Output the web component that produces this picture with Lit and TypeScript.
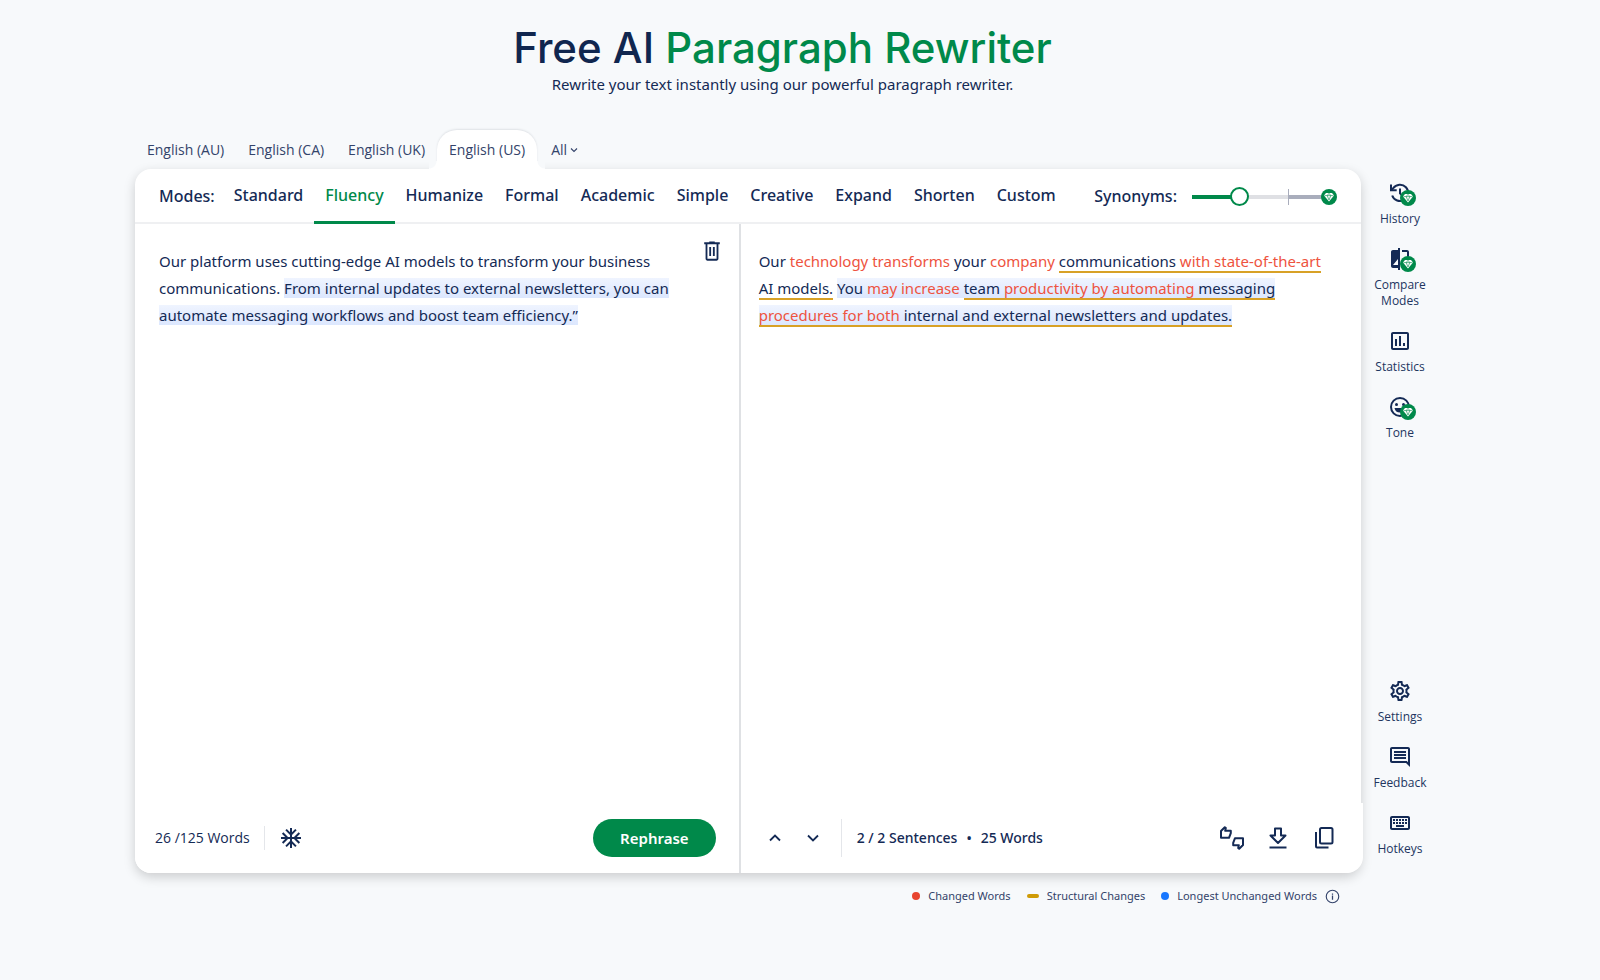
import { LitElement, html, css, svg } from "lit";
import { customElement, property, state } from "lit/decorators.js";
import { classMap } from "lit/directives/class-map.js";

const icons: Record<string, unknown> = {
  history: svg`<g fill="none" stroke="currentColor" stroke-width="2"><path d="M4.200 14.500A8.200 8.200 0 1 0 5.200 7.200L3.500 9"/><path d="M3 3.500v5.700h5.700"/><path d="M12 7.500V12.400l3.200 3.200"/></g>`,
  compare: svg`<path d="M10 3H5c-1.100 0-2 .9-2 2v14c0 1.100.9 2 2 2h5v2h2V1h-2v2zm0 15H5l5-6v6zm9-15h-5v2h5v13l-5-6v9h5c1.100 0 2-.9 2-2V5c0-1.100-.9-2-2-2z"/>`,
  stats: svg`<path d="M19 3H5c-1.100 0-2 .9-2 2v14c0 1.100.9 2 2 2h14c1.100 0 2-.9 2-2V5c0-1.100-.9-2-2-2zm0 16H5V5h14v14zM7 10h2v7H7zm4-3h2v10h-2zm4 7h2v3h-2z"/>`,
  tone: svg`<path d="M12 2a10 10 0 1 0 0 20 10 10 0 0 0 0-20zm0 18a8 8 0 1 1 0-16 8 8 0 0 1 0 16z"/><circle cx="8.500" cy="9.500" r="1.500"/><circle cx="15.500" cy="9.500" r="1.500"/><path d="M6.500 13h11a5.600 5.600 0 0 1-11 0z"/>`,
  settings: svg`<path d="M19.430 12.980c.04-.32.07-.64.07-.98 0-.34-.03-.66-.07-.98l2.110-1.650c.19-.15.24-.42.12-.64l-2-3.460c-.09-.16-.26-.25-.44-.25-.06 0-.12.010-.17.030l-2.490 1c-.52-.4-1.080-.73-1.690-.98l-.38-2.650C14.460 2.180 14.250 2 14 2h-4c-.25 0-.46.180-.49.420l-.38 2.650c-.61.250-1.170.590-1.690.980l-2.490-1c-.06-.02-.12-.03-.18-.03-.17 0-.34.090-.43.250l-2 3.460c-.13.220-.07.490.12.640l2.110 1.650c-.04.320-.07.650-.07.980 0 .33.030.66.070.98l-2.110 1.650c-.19.150-.24.420-.12.640l2 3.460c.09.160.26.250.44.250.06 0 .12-.01.17-.03l2.490-1c.52.400 1.080.730 1.690.980l.38 2.650c.03.240.24.420.49.420h4c.25 0 .46-.18.49-.42l.38-2.650c.61-.25 1.170-.59 1.690-.98l2.490 1c.06.020.12.030.18.030.17 0 .34-.09.43-.25l2-3.460c.12-.22.07-.49-.12-.64l-2.110-1.650zm-1.980-1.710c.04.310.05.520.05.730 0 .21-.02.430-.05.730l-.14 1.130.89.700 1.080.840-.7 1.210-1.270-.51-1.040-.42-.9.680c-.43.320-.84.560-1.250.730l-1.060.430-.16 1.130-.2 1.350h-1.400l-.19-1.350-.16-1.130-1.060-.43c-.43-.18-.83-.41-1.230-.71l-.91-.7-1.060.430-1.270.510-.7-1.210 1.080-.84.890-.7-.14-1.130c-.03-.31-.05-.54-.05-.74s.02-.43.050-.73l.14-1.130-.89-.7-1.080-.84.700-1.210 1.270.510 1.040.420.9-.68c.43-.32.840-.56 1.250-.73l1.060-.43.160-1.130.2-1.350h1.390l.19 1.350.16 1.130 1.060.430c.43.180.83.410 1.230.710l.91.700 1.060-.43 1.270-.51.700 1.210-1.070.850-.89.700.14 1.130zM12 8c-2.210 0-4 1.790-4 4s1.790 4 4 4 4-1.790 4-4-1.790-4-4-4zm0 6c-1.100 0-2-.9-2-2s.9-2 2-2 2 .9 2 2-.9 2-2 2z"/>`,
  feedback: svg`<path d="M21.990 4c0-1.100-.89-2-1.990-2H4c-1.100 0-2 .9-2 2v12c0 1.100.9 2 2 2h14l4 4-.01-18zM20 4v13.170L18.830 16H4V4h16zM6 12h12v2H6zm0-3h12v2H6zm0-3h12v2H6z"/>`,
  keyboard: svg`<path d="M20 7v10H4V7h16m0-2H4c-1.100 0-1.990.9-1.990 2L2 17c0 1.100.9 2 2 2h16c1.100 0 2-.9 2-2V7c0-1.100-.9-2-2-2zm-9 3h2v2h-2zm0 3h2v2h-2zM8 8h2v2H8zm0 3h2v2H8zm-3 0h2v2H5zm0-3h2v2H5zm3 6h8v2H8zm6-3h2v2h-2zm0-3h2v2h-2zm3 3h2v2h-2zm0-3h2v2h-2z"/>`,
  trash: svg`<path d="M15 2.500V1.500H9v1H3.500v2.200H5V20.500c0 1.100.9 2 2 2h10c1.100 0 2-.9 2-2V4.700h1.500V2.500H15zM17 20.500H7V4.700h10v15.800zM9 7.500h2v10H9zm4 0h2v10h-2z"/>`,
  snow: svg`<path d="M22 11h-4.170l3.240-3.240-1.410-1.420L15 11h-2V9l4.660-4.660-1.420-1.410L13 6.170V2h-2v4.170L7.760 2.930 6.340 4.340 11 9v2H9L4.340 6.340 2.930 7.760 6.170 11H2v2h4.170l-3.240 3.240 1.410 1.420L9 13h2v2l-4.660 4.660 1.420 1.410L11 17.830V22h2v-4.170l3.240 3.240 1.420-1.410L13 15v-2h2l4.660 4.660 1.410-1.420L17.830 13H22z"/>`,
  up: svg`<path d="M6 15l6-6 6 6" fill="none" stroke="currentColor" stroke-width="2.200"/>`,
  down: svg`<path d="M6 9l6 6 6-6" fill="none" stroke="currentColor" stroke-width="2.200"/>`,
  thumbs: svg`<g fill="none" stroke="currentColor" stroke-width="2" stroke-linejoin="round"><path d="M1 5L4.800 1.200l1 .9-.6 2.700h5.600v2.300L9 11.800H1z"/><path d="M23 19l-3.800 3.800-1-.9.6-2.700h-5.600v-2.300l1.800-4.700h8z"/></g>`,
  download: svg`<g fill="none" stroke="currentColor" stroke-width="2"><path d="M9 2.500h6v7h4.500L12 17 4.500 9.500H9z" stroke-linejoin="round"/><path d="M3.500 21.500h17"/></g>`,
  copy: svg`<g fill="none" stroke="currentColor" stroke-width="2"><rect x="8" y="2" width="12.500" height="15.500" rx="1.500"/><path d="M4 6v14.500c0 .6.4 1 1 1h11.500"/></g>`,
  info: svg`<circle cx="12" cy="12" r="10" fill="none" stroke="currentColor" stroke-width="1.800"/><path d="M11 10.500h2V17h-2zM11 7h2v2h-2z"/>`,
};

const icon = (name: string) =>
  html`<svg class="icon ${name}" viewBox="0 0 24 24" fill="currentColor" aria-hidden="true">${icons[name]}</svg>`;

const gem = html`<svg class="gem" viewBox="0 0 16 16" aria-hidden="true">
  <circle cx="8" cy="8" r="8" fill="#00894a" />
  <path d="M5 4h6l2 2.600L8 12.500 3 6.600z" fill="#fff" />
  <path d="M3.600 6.600h8.800M6.200 6.600L8 11l1.800-4.400L8 4.300z" fill="none" stroke="#00894a" stroke-width=".6" />
</svg>`;

@customElement("rail-item")
class RailItem extends LitElement {
  @property() name = "";
  @property() label = "";
  @property({ type: Boolean }) premium = false;

  static styles = css`
    :host { display: block; }
    .item {
      display: flex; flex-direction: column; align-items: center; gap: 6px;
      width: 100%; padding: 0; border: 0; background: none; color: #22355f;
      font: 12px/16px "Open Sans", sans-serif; cursor: pointer;
    }
    .pic { position: relative; display: block; height: 24px; color: #142a55; }
    .icon { display: block; width: 24px; height: 24px; }
    .gem { position: absolute; left: 12px; top: 9px; width: 16px; height: 16px; }
  `;

  render() {
    return html`<button class="item">
      <span class="pic">${icon(this.name)}${this.premium ? gem : ""}</span>
      <span>${this.label}</span>
    </button>`;
  }
}

@customElement("app-root")
class AppRoot extends LitElement {
  @state() private locale = "English (US)";
  @state() private mode = "Fluency";

  private locales = ["English (AU)", "English (CA)", "English (UK)", "English (US)"];
  private modes = ["Standard", "Fluency", "Humanize", "Formal", "Academic", "Simple", "Creative", "Expand", "Shorten", "Custom"];

  static styles = css`
    :host {
      display: block; box-sizing: border-box; min-height: 100vh;
      padding: 24px 170px 48px 135px; background: #f7f9fb; color: #142a55;
      font-family: "Noto Sans", "Open Sans", sans-serif;
    }
    * { box-sizing: border-box; }
    button { margin: 0; padding: 0; border: 0; background: none; color: inherit; font: inherit; cursor: pointer; }
    .icon { display: block; width: 24px; height: 24px; }
    .hero { text-align: center; }
    h1 { margin: 0; font: 500 42px/48px Inter, sans-serif; color: #10264f; }
    .green { color: #00894a; }
    .hero p { margin: 0; font-size: 15px; line-height: 24px; }
    .locales { display: flex; align-items: flex-end; margin-top: 34px; font: 14px/20px "Open Sans", sans-serif; color: #33436a; }
    .locale { height: 39px; padding: 0 12px; border-radius: 20px 20px 0 0; }
    .locale.on { position: relative; background: #fff; box-shadow: 0 -1px 2px #dfe2e6; clip-path: inset(-4px -12px 0); }
    .locale.on::before, .locale.on::after {
      content: ""; position: absolute; bottom: 0; width: 8px; height: 8px;
    }
    .locale.on::before { right: 100%; background: radial-gradient(circle at 0 0, #f7f9fb 7px, #fff 8px); }
    .locale.on::after { left: 100%; background: radial-gradient(circle at 100% 0, #f7f9fb 7px, #fff 8px); }
    .all { display: flex; align-items: center; gap: 1px; height: 39px; padding: 0 14px; }
    .all .icon { width: 12px; height: 12px; }
    .workspace { display: grid; grid-template-columns: minmax(0, 1fr) 60px; column-gap: 9px; }
    .card {
      display: flex; flex-direction: column; min-height: 704px; background: #fff;
      border-radius: 16px; box-shadow: 0 4px 12px rgba(0, 0, 0, .18);
    }
    .modes {
      display: flex; align-items: stretch; height: 55px; padding: 0 24px; border-bottom: 2px solid #eff0f2;
      font-size: 16px; line-height: 22px; font-weight: 500;
    }
    .title { align-self: center; margin-right: 8px; }
    .mode { padding: 0 11px; border-bottom: 3px solid transparent; margin-bottom: -2px; }
    .mode.on { color: #00894a; border-color: #00894a; }
    .synonyms { display: flex; align-items: center; gap: 15px; margin-left: auto; }
    .track { position: relative; display: flex; align-items: center; width: 145px; height: 22px; padding-top: 2px; }
    .track .gem { position: absolute; right: 0; width: 16px; height: 16px; }
    .slider {
      appearance: none; width: 132px; height: 20px; margin: 0;
      background:
        linear-gradient(#a9adbc, #a9adbc) 96px 50% / 1px 16px no-repeat,
        linear-gradient(90deg, #00894a 48px, #dfe0e4 48px 96px, #a9adbc 96px) 0 50% / 100% 4px no-repeat;
    }
    .slider::-webkit-slider-thumb {
      appearance: none; box-sizing: border-box; width: 19px; height: 19px;
      border: 2px solid #00894a; border-radius: 50%; background: #fff;
    }
    .panes { display: grid; grid-template-columns: minmax(0, 97fr) minmax(0, 100fr); flex: 1; }
    .pane { display: flex; flex-direction: column; }
    .pane + .pane { border-left: 2px solid #dfe1e4; }
    .body { display: flex; flex: 1; align-items: flex-start; }
    .text { flex: 1; margin: 0; padding: 24px 14px 0 24px; outline: none; font-size: 15px; line-height: 27px; }
    .pane + .pane .text { padding: 24px 30px 0 18px; }
    .clear { margin: 16px 16px 0 0; }
    .clear .icon { width: 22px; height: 22px; }
    .hl { background: linear-gradient(#eff4ff, #dce7fe); }
    .line { border-bottom: 2px solid #d8a126; }
    .red { color: #ee5340; }
    .foot { display: flex; align-items: center; height: 70px; padding: 0 23px 0 20px; font-size: 14px; line-height: 20px; background: #fff; }
    .foot.left { border-radius: 0 0 0 16px; font-family: "Open Sans", sans-serif; }
    .foot.right { padding: 0 27px 0 24px; margin-right: -2px; border-radius: 0 0 16px 0; font-weight: 500; }
    .rule { width: 1px; height: 24px; margin: 0 14px; background: #e4e6ea; }
    .right .rule { height: 38px; margin: 0 15px 0 18px; }
    .rephrase {
      height: 38px; margin-left: auto; padding: 0 27px; border-radius: 19px;
      background: #00894a; color: #fff; font: 600 15px/22px "Noto Sans", sans-serif;
    }
    .steps { display: flex; gap: 18px; }
    .steps .icon { width: 20px; height: 20px; }
    .dot { margin: 0 9px; }
    .actions { display: flex; gap: 22px; margin-left: auto; }
    .rail { display: flex; flex-direction: column; justify-content: space-between; padding: 12px 0 16px; }
    .group { display: flex; flex-direction: column; gap: 20px; }
    .legend { display: flex; align-items: center; justify-content: flex-end; gap: 16px; margin: 14px 90px 0 0; font-size: 11px; line-height: 18px; color: #33436a; }
    .key { display: flex; align-items: center; gap: 8px; }
    .mark { width: 8px; height: 8px; border-radius: 50%; background: #e8452f; }
    .mark.gold { width: 12px; height: 4px; border-radius: 2px; background: #cf9b07; }
    .mark.blue { background: #1877ff; }
    .key .icon { width: 15px; height: 15px; }
  `;

  render() {
    return html`
      <header class="hero">
        <h1>Free AI <span class="green">Paragraph Rewriter</span></h1>
        <p>Rewrite your text instantly using our powerful paragraph rewriter.</p>
      </header>
      <nav class="locales" aria-label="Language">
        ${this.locales.map((l) => html`<button class=${classMap({ locale: true, on: l === this.locale })} @click=${() => (this.locale = l)}>${l}</button>`)}
        <button class="all">All ${icon("down")}</button>
      </nav>
      <div class="workspace">
        <main class="card">
          <div class="modes">
            <span class="title">Modes:</span>
            ${this.modes.map((m) => html`<button class=${classMap({ mode: true, on: m === this.mode })} @click=${() => (this.mode = m)}>${m}</button>`)}
            <div class="synonyms">
              <label for="syn">Synonyms:</label>
              <span class="track"><input class="slider" id="syn" type="range" min="0" max="100" value="34" />${gem}</span>
            </div>
          </div>
          <div class="panes">
            <section class="pane">
              <div class="body">
                <div class="text" role="textbox" aria-multiline="true" aria-label="Original text" contenteditable="true" spellcheck="false">Our platform uses cutting-edge AI models to transform your business communications. <span class="hl">From internal updates to external newsletters, you can automate messaging workflows and boost team efficiency.”</span></div>
                <button class="clear" aria-label="Clear text">${icon("trash")}</button>
              </div>
              <div class="foot left">
                <span>26 /125 Words</span><span class="rule"></span>
                <button aria-label="Freeze words">${icon("snow")}</button>
                <button class="rephrase">Rephrase</button>
              </div>
            </section>
            <section class="pane">
              <div class="body">
                <p class="text">Our <span class="red">technology transforms</span> your <span class="red">company</span> <span class="line">communications <span class="red">with state-of-the-art</span> AI models.</span> <span class="hl">You <span class="red">may increase</span> <span class="line">team <span class="red">productivity by automating</span> messaging <span class="red">procedures for both</span> internal and external newsletters and updates.</span></span></p>
              </div>
              <div class="foot right">
                <div class="steps">
                  <button aria-label="Previous sentence">${icon("up")}</button>
                  <button aria-label="Next sentence">${icon("down")}</button>
                </div>
                <span class="rule"></span>
                <span>2 / 2 Sentences</span><span class="dot">•</span><span>25 Words</span>
                <div class="actions">
                  <button aria-label="Rate result">${icon("thumbs")}</button>
                  <button aria-label="Download">${icon("download")}</button>
                  <button aria-label="Copy">${icon("copy")}</button>
                </div>
              </div>
            </section>
          </div>
        </main>
        <aside class="rail">
          <div class="group">
            <rail-item name="history" label="History" premium></rail-item>
            <rail-item name="compare" label="Compare Modes" premium></rail-item>
            <rail-item name="stats" label="Statistics"></rail-item>
            <rail-item name="tone" label="Tone" premium></rail-item>
          </div>
          <div class="group">
            <rail-item name="settings" label="Settings"></rail-item>
            <rail-item name="feedback" label="Feedback"></rail-item>
            <rail-item name="keyboard" label="Hotkeys"></rail-item>
          </div>
        </aside>
      </div>
      <footer class="legend">
        <span class="key"><span class="mark"></span>Changed Words</span>
        <span class="key"><span class="mark gold"></span>Structural Changes</span>
        <span class="key"><span class="mark blue"></span>Longest Unchanged Words ${icon("info")}</span>
      </footer>
    `;
  }
}
